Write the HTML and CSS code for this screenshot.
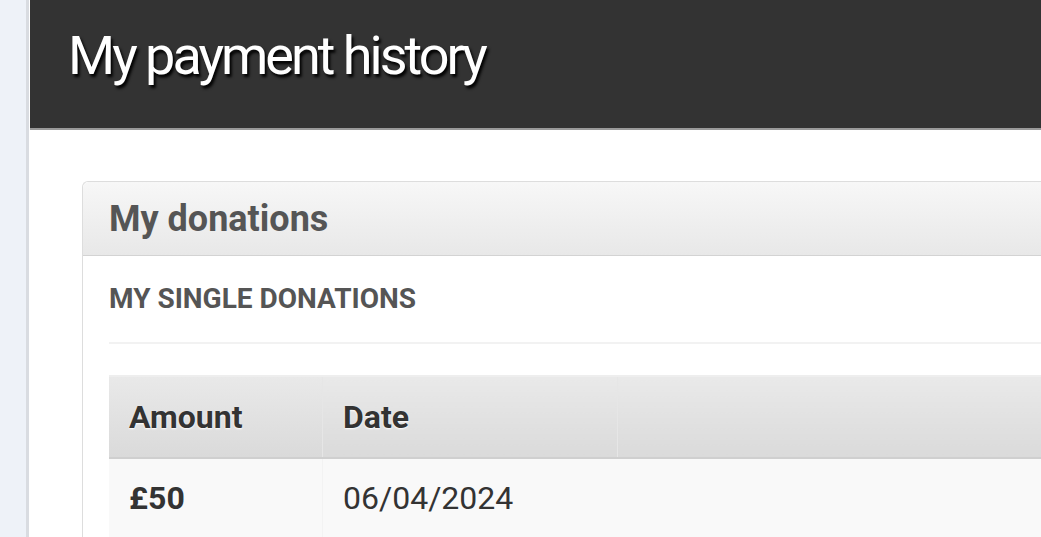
FILE: index.html
```html
<!DOCTYPE html>
<html lang="en">
<head>
    <meta charset="UTF-8">
    <meta name="viewport" content="width=device-width, initial-scale=1.0">
    <title>My payment history</title>
    <link rel="stylesheet" href="styles.css">
</head>
<body>
    <div class="side-strip"></div>
    <div class="main">
        <div class="page-header">
            <h1>My payment history</h1>
        </div>
        <div class="content">
            <div class="panel">
                <div class="panel-heading">My donations</div>
                <div class="panel-body">
                    <h3 class="section-title">My single donations</h3>
                    <table class="donations">
                        <thead>
                            <tr>
                                <th class="col-amount">Amount</th>
                                <th class="col-date">Date</th>
                                <th></th>
                            </tr>
                        </thead>
                        <tbody>
                            <tr>
                                <td class="amount">£50</td>
                                <td>06/04/2024</td>
                                <td></td>
                            </tr>
                        </tbody>
                    </table>
                </div>
            </div>
        </div>
    </div>
</body>
</html>
```

FILE: styles.css
```css
html, body {
    margin: 0;
    height: 100%;
    overflow: hidden;
}
body {
    font-family: Roboto, "Noto Sans", sans-serif;
    display: flex;
    background: #fff;
    color: #333;
}
.side-strip {
    flex: 0 0 26px;
    background: #eef2f8;
    border-right: 3px solid #d9dce1;
}
.main {
    flex: 0 0 1100px;
    padding-left: 1px;
}
.page-header {
    height: 130px;
    box-sizing: border-box;
    background: #333;
    border-bottom: 2px solid #9a9a9a;
    padding: 29px 0 0 38px;
}
.page-header h1 {
    margin: 0;
    color: #fff;
    font-weight: 400;
    font-size: 54px;
    line-height: 54px;
    letter-spacing: -3px;
    text-shadow: 2px 3px 3px #000;
}
.content {
    padding: 51px 0 0 52px;
}
.panel {
    border: 1px solid #ddd;
    border-right: none;
    border-radius: 6px 0 0 0;
}
.panel-heading {
    height: 74px;
    box-sizing: border-box;
    padding: 0 26px;
    display: flex;
    align-items: center;
    background: linear-gradient(#f7f7f7, #e8e8e8);
    border-bottom: 1px solid #d3d3d3;
    border-radius: 6px 0 0 0;
    font-size: 36px;
    font-weight: 700;
    color: #555;
}
.panel-body {
    padding: 0 0 0 26px;
}
.section-title {
    margin: 0 0 31px;
    padding: 27px 0 27px;
    border-bottom: 2px solid #f2f2f2;
    font-size: 28px;
    line-height: 32px;
    font-weight: 700;
    text-transform: uppercase;
    color: #555;
}
.donations {
    width: 100%;
    border-collapse: collapse;
    border-top: 2px solid #eee;
}
.donations th {
    height: 80px;
    padding: 0 20px;
    text-align: left;
    font-size: 32px;
    font-weight: 700;
    color: #333;
    text-shadow: 0 1px 2px #fff;
    background: linear-gradient(#e9e9e9, #dadada);
    border-bottom: 2px solid #cfcfcf;
    border-right: 1px solid #e6e6e6;
}
.donations td {
    height: 78px;
    padding: 0 20px;
    font-size: 32px;
    background: #f9f9f9;
}
.donations .col-amount {
    width: 173px;
}
.donations .col-date {
    width: 254px;
}
.donations .amount {
    font-weight: 700;
    border-right: 1px solid #f3f3f3;
}
```
